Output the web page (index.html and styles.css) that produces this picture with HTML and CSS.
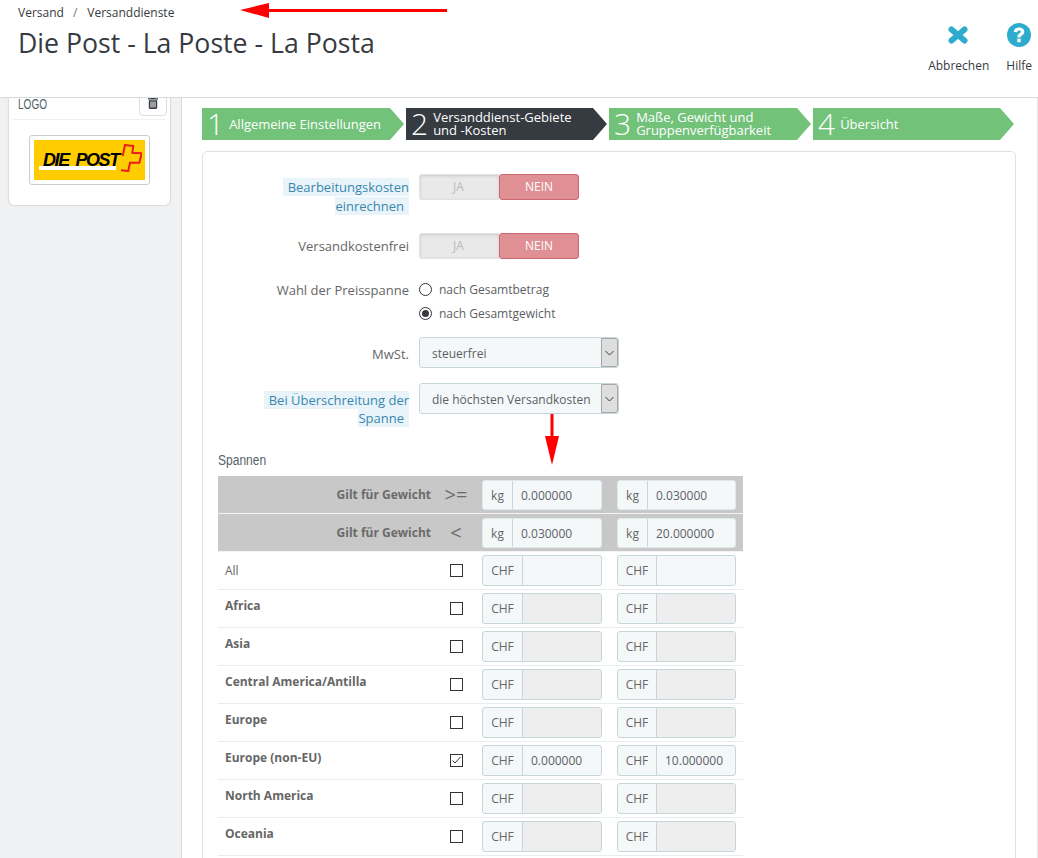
FILE: index.html
```html
<!DOCTYPE html>
<html lang="de">
<head>
<meta charset="utf-8">
<title>Die Post - La Poste - La Posta</title>
<link rel="stylesheet" href="styles.css">
</head>
<body>
<header class="page-head">
  <div class="head-left">
    <nav class="crumbs"><span>Versand</span><span class="crumb-sep">/</span><span>Versanddienste</span></nav>
    <h1 class="page-title">Die Post - La Poste - La Posta</h1>
  </div>
  <div class="toolbar">
    <a class="tool">
      <svg class="tool-icon" width="24" height="24" viewBox="0 0 24 24"><path d="M4.500 6.500 17.500 17.500M17.500 6.500 4.500 17.500" fill="none" stroke="#2eacce" stroke-width="6" stroke-linecap="round"/></svg>
      <span>Abbrechen</span>
    </a>
    <a class="tool">
      <svg class="tool-icon" width="24" height="24" viewBox="0 0 24 24"><circle cx="12" cy="12" r="12" fill="#2eacce"/><path d="M6.800 9C7 6 9.200 4.500 12.100 4.500c3 0 5.200 1.700 5.200 4.200 0 1.900-1.100 2.900-2.300 3.700-1 .6-1.300 1-1.300 2h-3.400c0-2.100.7-3 1.900-3.800 1-.7 1.600-1.100 1.600-1.800 0-.8-.7-1.300-1.700-1.300-1.100 0-1.800.7-1.900 1.700zM10.300 15.800h3.400v3.400h-3.400z" fill="#fff"/></svg>
      <span>Hilfe</span>
    </a>
  </div>
</header>

<svg class="arrow arrow-left" width="207" height="15" viewBox="0 0 207 15"><path d="M0 7 29 0v6h178v3H29v6z" fill="#f00"/></svg>
<svg class="arrow arrow-down" width="16" height="52" viewBox="0 0 16 52"><path d="M6.500 0h3v22H15L8 51 1 22h5.500z" fill="#f00"/></svg>

<div class="layout">
  <aside class="sidebar">
    <section class="logo-panel">
      <div class="logo-head">
        <span class="logo-title">LOGO</span>
        <span class="trash-btn">
          <svg width="10" height="12" viewBox="0 0 10 12"><path d="M3.500 0h3l.8 1.200H10v1.300H0V1.200h2.700zM.8 3.200h8.400v7.400c0 .8-.6 1.400-1.300 1.400H2.100c-.7 0-1.300-.6-1.300-1.400zm1.700 1.300v6h1v-6zm2 0v6h1v-6zm2 0v6h1v-6z" fill="#363a41"/></svg>
        </span>
      </div>
      <div class="logo-frame">
        <div class="logo-image">
          <span class="logo-word">DIE POST</span>
          <svg class="logo-cross" width="22" height="28" viewBox="0 0 22 28"><path d="M2.700 12 5 1l8.300 1-1 6.700 9.400.600-2.400 9.400H10l-1.700 8.300-7.300-.7" fill="none" stroke="#ea1c1c" stroke-width="2"/></svg>
        </div>
      </div>
    </section>
  </aside>

  <main class="content">
    <ol class="wizard">
      <li class="step step-1"><span class="step-num">1</span><span class="step-text">Allgemeine Einstellungen</span></li>
      <li class="step step-active step-2"><span class="step-num">2</span><span class="step-text">Versanddienst-Gebiete<br>und -Kosten</span></li>
      <li class="step step-3"><span class="step-num">3</span><span class="step-text">Maße, Gewicht und<br>Gruppenverfügbarkeit</span></li>
      <li class="step step-4"><span class="step-num">4</span><span class="step-text">Übersicht</span></li>
    </ol>

    <section class="card">
      <div class="form-row form-row-a">
        <div class="form-label"><span class="hint">Bearbeitungskosten einrechnen</span></div>
        <div class="toggle"><span class="toggle-yes">JA</span><span class="toggle-no">NEIN</span></div>
      </div>
      <div class="form-row form-row-b">
        <div class="form-label">Versandkostenfrei</div>
        <div class="toggle"><span class="toggle-yes">JA</span><span class="toggle-no">NEIN</span></div>
      </div>
      <div class="form-row form-row-c">
        <div class="form-label">Wahl der Preisspanne</div>
        <div class="radios">
          <div class="radio-line"><span class="radio"></span>nach Gesamtbetrag</div>
          <div class="radio-line radio-line-second"><span class="radio radio-on"></span>nach Gesamtgewicht</div>
        </div>
      </div>
      <div class="form-row form-row-d">
        <div class="form-label form-label-select">MwSt.</div>
        <div class="select"><span class="select-value">steuerfrei</span><span class="select-btn"><svg width="9" height="6" viewBox="0 0 9 6"><path d="M.5 1 4.500 5l4-4" fill="none" stroke="#363a41" stroke-width="1"/></svg></span></div>
      </div>
      <div class="form-row form-row-e">
        <div class="form-label form-label-select"><span class="hint">Bei Überschreitung der Spanne</span></div>
        <div class="select"><span class="select-value">die höchsten Versandkosten</span><span class="select-btn"><svg width="9" height="6" viewBox="0 0 9 6"><path d="M.5 1 4.500 5l4-4" fill="none" stroke="#363a41" stroke-width="1"/></svg></span></div>
      </div>

      <h2 class="ranges-title">Spannen</h2>
      <div class="ranges">
        <div class="r-row r-head">
          <div class="r-name">Gilt für Gewicht</div><div class="r-mid r-sym">&gt;=</div>
          <div class="field"><span class="addon addon-kg">kg</span><span class="value">0.000000</span></div>
          <div class="field"><span class="addon addon-kg">kg</span><span class="value">0.030000</span></div>
        </div>
        <div class="r-row r-head">
          <div class="r-name">Gilt für Gewicht</div><div class="r-mid r-sym">&lt;</div>
          <div class="field"><span class="addon addon-kg">kg</span><span class="value">0.030000</span></div>
          <div class="field"><span class="addon addon-kg">kg</span><span class="value">20.000000</span></div>
        </div>
        <div class="r-row">
          <div class="zone zone-all">All</div><div class="r-mid"><span class="check"></span></div>
          <div class="field"><span class="addon">CHF</span><span class="value"></span></div>
          <div class="field"><span class="addon">CHF</span><span class="value"></span></div>
        </div>
        <div class="r-row">
          <div class="zone">Africa</div><div class="r-mid"><span class="check"></span></div>
          <div class="field"><span class="addon">CHF</span><span class="value value-off"></span></div>
          <div class="field"><span class="addon">CHF</span><span class="value value-off"></span></div>
        </div>
        <div class="r-row">
          <div class="zone">Asia</div><div class="r-mid"><span class="check"></span></div>
          <div class="field"><span class="addon">CHF</span><span class="value value-off"></span></div>
          <div class="field"><span class="addon">CHF</span><span class="value value-off"></span></div>
        </div>
        <div class="r-row">
          <div class="zone">Central America/Antilla</div><div class="r-mid"><span class="check"></span></div>
          <div class="field"><span class="addon">CHF</span><span class="value value-off"></span></div>
          <div class="field"><span class="addon">CHF</span><span class="value value-off"></span></div>
        </div>
        <div class="r-row">
          <div class="zone">Europe</div><div class="r-mid"><span class="check"></span></div>
          <div class="field"><span class="addon">CHF</span><span class="value value-off"></span></div>
          <div class="field"><span class="addon">CHF</span><span class="value value-off"></span></div>
        </div>
        <div class="r-row">
          <div class="zone">Europe (non-EU)</div><div class="r-mid"><span class="check"><svg width="11" height="11" viewBox="0 0 11 11"><path d="M1.500 5.500 4 8l5.500-6" fill="none" stroke="#363a41" stroke-width="1"/></svg></span></div>
          <div class="field"><span class="addon">CHF</span><span class="value">0.000000</span></div>
          <div class="field"><span class="addon">CHF</span><span class="value">10.000000</span></div>
        </div>
        <div class="r-row">
          <div class="zone">North America</div><div class="r-mid"><span class="check"></span></div>
          <div class="field"><span class="addon">CHF</span><span class="value value-off"></span></div>
          <div class="field"><span class="addon">CHF</span><span class="value value-off"></span></div>
        </div>
        <div class="r-row">
          <div class="zone">Oceania</div><div class="r-mid"><span class="check"></span></div>
          <div class="field"><span class="addon">CHF</span><span class="value value-off"></span></div>
          <div class="field"><span class="addon">CHF</span><span class="value value-off"></span></div>
        </div>
      </div>
    </section>
  </main>
</div>
</body>
</html>
```

FILE: styles.css
```css
* { box-sizing: border-box; }
html, body { height: 858px; overflow: hidden; }
body {
  margin: 0;
  position: relative;
  background: #fff;
  color: #666;
  font-family: "Open Sans", sans-serif;
  font-size: 13px;
}

/* header */
.page-head {
  position: relative;
  z-index: 2;
  display: flex;
  justify-content: space-between;
  height: 98px;
  background: #fff;
  border-bottom: 1px solid #d8dbdd;
  padding-left: 18px;
}
.crumbs {
  display: flex;
  color: #363a41;
  font-size: 12px;
  line-height: 17px;
  padding-top: 4px;
}
.crumb-sep { margin: 0 10px 0 9px; color: #6c7680; }
.page-title {
  margin: 4px 0 0;
  color: #363a41;
  font-size: 26.67px;
  line-height: 36px;
  font-weight: 400;
}
.toolbar { display: flex; gap: 17px; padding: 23px 6px 0 0; }
.tool {
  display: flex;
  flex-direction: column;
  align-items: center;
  color: #363a41;
  font-size: 12px;
  line-height: 17px;
}
.tool-icon { margin-bottom: 10px; }

/* annotation arrows */
.arrow { position: absolute; z-index: 3; }
.arrow-left { left: 240px; top: 3px; }
.arrow-down { left: 544px; top: 414px; }

/* layout */
.layout { display: flex; height: 760px; }
.sidebar {
  width: 182px;
  flex: none;
  background: #eff1f2;
  border-right: 1px solid #d8dbdd;
  padding: 0 11px 0 9px;
}
.logo-panel {
  height: 118px;
  margin-top: -11px;
  background: #fff;
  border-radius: 5px;
  box-shadow: 0 0 2px rgba(0, 0, 0, .3);
  padding: 0 4px;
}
.logo-head {
  display: flex;
  justify-content: space-between;
  height: 33px;
  border-bottom: 1px solid #eef0f1;
  padding-left: 5px;
}
.logo-title {
  color: #555f6b;
  font-family: "Liberation Sans", sans-serif;
  font-size: 14px;
  line-height: 18px;
  padding-top: 8px;
  height: 31px;
  transform: scaleX(.72);
  transform-origin: left center;
}
.trash-btn {
  display: flex;
  justify-content: center;
  align-items: flex-end;
  width: 28px;
  height: 29px;
  border: 1px solid #dcdfe1;
  border-radius: 0 0 4px 4px;
  padding-bottom: 6px;
  margin-right: -1px;
}
.logo-frame {
  width: 121px;
  height: 50px;
  margin: 15px 0 0 16px;
  border: 1px solid #ccc;
  border-radius: 3px;
  padding: 4px;
}
.logo-image {
  position: relative;
  display: flex;
  height: 40px;
  width: 111px;
  background: #fc0;
  padding: 11px 0 0 5px;
}
.logo-word {
  color: #000;
  font-family: "Liberation Sans", sans-serif;
  font-size: 18px;
  line-height: 18px;
  font-weight: 700;
  font-style: italic;
  letter-spacing: -1.4px;
  word-spacing: 3px;
  height: 19px;
  width: 77px;
  white-space: nowrap;
  background: linear-gradient(#fc0 15px, #fff 15px);
  padding-left: 4px;
}
.logo-cross { position: absolute; left: 86px; top: 4px; }

/* wizard */
.content { flex: 1; min-width: 0; padding: 10px 1px 0 20px; border-right: 1px solid #e4e6e8; }
.wizard { display: flex; gap: 2px; margin: 0; padding: 0; list-style: none; }
.step {
  display: flex;
  align-items: center;
  width: 202px;
  height: 32px;
  padding-left: 5px;
  background: #72c279;
  color: #fff;
  clip-path: polygon(0 0, calc(100% - 14px) 0, 100% 50%, calc(100% - 14px) 100%, 0 100%);
}
.step-active { background: #363a41; }
.step-2 { width: 201px; }
.step-4 { width: 201px; }
.step-num {
  font-size: 30px;
  line-height: 32px;
  font-weight: 300;
  margin-right: 5px;
  min-width: 17px;
}
.step-text { font-size: 13px; line-height: 13px; }

/* card */
.card {
  width: 814px;
  height: 760px;
  margin-top: 11px;
  border: 1px solid #dfe2e4;
  border-radius: 5px;
  padding: 22px 15px 0;
}
.form-row { display: flex; gap: 10px; align-items: flex-start; }
.form-row-a { height: 42px; margin-bottom: 17px; }
.form-row-b { height: 26px; margin-bottom: 18px; }
.form-row-c { height: 48px; margin-bottom: 12px; }
.form-row-d { height: 31px; margin-bottom: 15px; }
.form-row-e { height: 45px; }
.form-row-e .form-label { line-height: 18px; }
.form-label {
  width: 191px;
  flex: none;
  color: #666;
  text-align: right;
  line-height: 19px;
  padding-top: 4px;
}
.form-label-select { padding-top: 8px; }
.hint {
  background: #e9f4fa;
  color: #3a87ad;
  padding: 0 5px;
}
.toggle { display: flex; width: 160px; height: 26px; line-height: 24px; font-size: 12px; text-align: center; }
.toggle-yes {
  width: 80px;
  background: #e9e9e9;
  color: #bbb;
  border: 1px solid #e2e2e2;
  border-right: 0;
  border-radius: 3px 0 0 3px;
  box-shadow: inset 0 1px 3px rgba(0, 0, 0, .14);
  padding-right: 2px;
}
.toggle-no {
  width: 80px;
  background: #e08f95;
  border: 1px solid #c8696f;
  border-radius: 3px;
  color: #fff;
}
.radios { padding-top: 1px; }
.radio-line { display: flex; align-items: center; height: 23px; font-size: 12px; color: #5c6066; }
.radio-line-second { margin-top: 1px; }
.radio {
  width: 13px;
  height: 13px;
  border: 1px solid #333;
  border-radius: 50%;
  margin-right: 7px;
  display: flex;
  align-items: center;
  justify-content: center;
}
.radio-on::after {
  content: "";
  width: 7px;
  height: 7px;
  border-radius: 50%;
  background: #363a41;
}
.select {
  display: flex;
  justify-content: space-between;
  width: 200px;
  height: 31px;
  background: #f5f8f9;
  border: 1px solid #c7d6db;
  border-radius: 3px;
  font-size: 12px;
  line-height: 31px;
  color: #5c6066;
  padding-left: 12px;
}
.select-btn {
  display: flex;
  align-items: center;
  justify-content: center;
  width: 17px;
  background: #dedede;
  border: 1px solid #a8a8a8;
  border-radius: 0 3px 3px 0;
}

/* ranges */
.ranges-title {
  margin: 23px 0 7px;
  color: #555f6b;
  font-family: "Liberation Sans", sans-serif;
  font-size: 14px;
  line-height: 18px;
  font-weight: 400;
  transform: scaleX(.86);
  transform-origin: left center;
}
.ranges { width: 525px; }
.r-row {
  display: grid;
  grid-template-columns: 214px 50px 135px 119px;
  align-items: center;
  height: 38px;
  border-bottom: 1px solid #eaedee;
}
.r-head { background: #c8c8c8; border-bottom-color: #f3f3f3; }
.r-name { text-align: right; font-size: 12px; font-weight: 700; color: #6b6b6b; padding-right: 1px; }
.r-mid { display: flex; justify-content: center; padding-right: 2px; }
.r-sym { font-size: 20px; line-height: 24px; color: #6b6b6b; }
.zone {
  align-self: start;
  padding: 7px 0 0 7px;
  font-size: 12px;
  line-height: 17px;
  font-weight: 700;
  color: #666;
}
.zone-all { align-self: center; padding-top: 0; font-weight: 400; }
.check {
  display: flex;
  align-items: center;
  justify-content: center;
  width: 13px;
  height: 13px;
  border: 1px solid #333;
  background: #fff;
}
.field {
  display: flex;
  width: 120px;
  height: 31px;
  border: 1px solid #c7d6db;
  border-radius: 3px;
  background: #f5f8f9;
  font-size: 12px;
  line-height: 29px;
  overflow: hidden;
}
.r-head .field { height: 30px; border-color: #dfe8eb; }
.r-row .field:last-child { width: 119px; }
.addon {
  width: 40px;
  flex: none;
  text-align: center;
  color: #666;
  border-right: 1px solid #c7d6db;
}
.field:last-child .addon { width: 39px; }
.field .addon-kg, .field:last-child .addon-kg { width: 30px; }
.value { flex: 1; padding-left: 8px; color: #5c6066; }
.value-off { background: #eee; }
```
